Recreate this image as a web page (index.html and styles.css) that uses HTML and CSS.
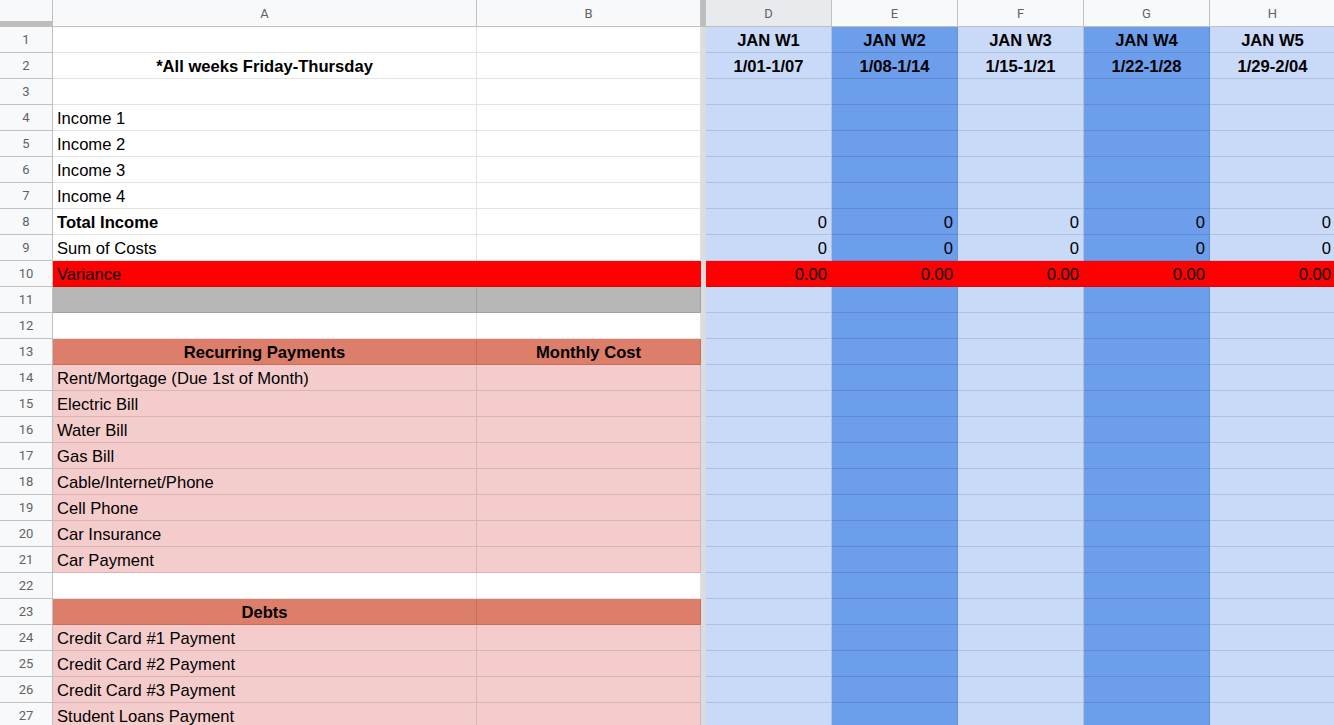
FILE: index.html
```html
<!DOCTYPE html>
<html>
<head>
<meta charset="utf-8">
<link rel="stylesheet" href="styles.css">
</head>
<body>
<div class="sheet">
  <div class="row head">
    <div class="corner"></div><div class="ch">A</div><div class="ch">B</div><div class="fz"></div><div class="ch sel">D</div><div class="ch">E</div><div class="ch">F</div><div class="ch">G</div><div class="ch">H</div>
  </div>
  <div class="row">
    <div class="rh">1</div><div class="c"></div><div class="c"></div><div class="fz"></div><div class="c b ctr">JAN W1</div><div class="c b ctr">JAN W2</div><div class="c b ctr">JAN W3</div><div class="c b ctr">JAN W4</div><div class="c b ctr">JAN W5</div>
  </div>
  <div class="row">
    <div class="rh">2</div><div class="c b ctr">*All weeks Friday-Thursday</div><div class="c"></div><div class="fz"></div><div class="c b ctr">1/01-1/07</div><div class="c b ctr">1/08-1/14</div><div class="c b ctr">1/15-1/21</div><div class="c b ctr">1/22-1/28</div><div class="c b ctr">1/29-2/04</div>
  </div>
  <div class="row">
    <div class="rh">3</div><div class="c"></div><div class="c"></div><div class="fz"></div><div class="c"></div><div class="c"></div><div class="c"></div><div class="c"></div><div class="c"></div>
  </div>
  <div class="row">
    <div class="rh">4</div><div class="c">Income 1</div><div class="c"></div><div class="fz"></div><div class="c"></div><div class="c"></div><div class="c"></div><div class="c"></div><div class="c"></div>
  </div>
  <div class="row">
    <div class="rh">5</div><div class="c">Income 2</div><div class="c"></div><div class="fz"></div><div class="c"></div><div class="c"></div><div class="c"></div><div class="c"></div><div class="c"></div>
  </div>
  <div class="row">
    <div class="rh">6</div><div class="c">Income 3</div><div class="c"></div><div class="fz"></div><div class="c"></div><div class="c"></div><div class="c"></div><div class="c"></div><div class="c"></div>
  </div>
  <div class="row">
    <div class="rh">7</div><div class="c">Income 4</div><div class="c"></div><div class="fz"></div><div class="c"></div><div class="c"></div><div class="c"></div><div class="c"></div><div class="c"></div>
  </div>
  <div class="row">
    <div class="rh">8</div><div class="c b">Total Income</div><div class="c"></div><div class="fz"></div><div class="c num">0</div><div class="c num">0</div><div class="c num">0</div><div class="c num">0</div><div class="c num">0</div>
  </div>
  <div class="row">
    <div class="rh">9</div><div class="c">Sum of Costs</div><div class="c"></div><div class="fz"></div><div class="c num">0</div><div class="c num">0</div><div class="c num">0</div><div class="c num">0</div><div class="c num">0</div>
  </div>
  <div class="row red">
    <div class="rh">10</div><div class="c">Variance</div><div class="c"></div><div class="fz"></div><div class="c num">0.00</div><div class="c num">0.00</div><div class="c num">0.00</div><div class="c num">0.00</div><div class="c num">0.00</div>
  </div>
  <div class="row gray">
    <div class="rh">11</div><div class="c"></div><div class="c"></div><div class="fz"></div><div class="c"></div><div class="c"></div><div class="c"></div><div class="c"></div><div class="c"></div>
  </div>
  <div class="row">
    <div class="rh">12</div><div class="c"></div><div class="c"></div><div class="fz"></div><div class="c"></div><div class="c"></div><div class="c"></div><div class="c"></div><div class="c"></div>
  </div>
  <div class="row sec">
    <div class="rh">13</div><div class="c b ctr">Recurring Payments</div><div class="c b ctr">Monthly Cost</div><div class="fz"></div><div class="c"></div><div class="c"></div><div class="c"></div><div class="c"></div><div class="c"></div>
  </div>
  <div class="row pink">
    <div class="rh">14</div><div class="c">Rent/Mortgage (Due 1st of Month)</div><div class="c"></div><div class="fz"></div><div class="c"></div><div class="c"></div><div class="c"></div><div class="c"></div><div class="c"></div>
  </div>
  <div class="row pink">
    <div class="rh">15</div><div class="c">Electric Bill</div><div class="c"></div><div class="fz"></div><div class="c"></div><div class="c"></div><div class="c"></div><div class="c"></div><div class="c"></div>
  </div>
  <div class="row pink">
    <div class="rh">16</div><div class="c">Water Bill</div><div class="c"></div><div class="fz"></div><div class="c"></div><div class="c"></div><div class="c"></div><div class="c"></div><div class="c"></div>
  </div>
  <div class="row pink">
    <div class="rh">17</div><div class="c">Gas Bill</div><div class="c"></div><div class="fz"></div><div class="c"></div><div class="c"></div><div class="c"></div><div class="c"></div><div class="c"></div>
  </div>
  <div class="row pink">
    <div class="rh">18</div><div class="c">Cable/Internet/Phone</div><div class="c"></div><div class="fz"></div><div class="c"></div><div class="c"></div><div class="c"></div><div class="c"></div><div class="c"></div>
  </div>
  <div class="row pink">
    <div class="rh">19</div><div class="c">Cell Phone</div><div class="c"></div><div class="fz"></div><div class="c"></div><div class="c"></div><div class="c"></div><div class="c"></div><div class="c"></div>
  </div>
  <div class="row pink">
    <div class="rh">20</div><div class="c">Car Insurance</div><div class="c"></div><div class="fz"></div><div class="c"></div><div class="c"></div><div class="c"></div><div class="c"></div><div class="c"></div>
  </div>
  <div class="row pink">
    <div class="rh">21</div><div class="c">Car Payment</div><div class="c"></div><div class="fz"></div><div class="c"></div><div class="c"></div><div class="c"></div><div class="c"></div><div class="c"></div>
  </div>
  <div class="row">
    <div class="rh">22</div><div class="c"></div><div class="c"></div><div class="fz"></div><div class="c"></div><div class="c"></div><div class="c"></div><div class="c"></div><div class="c"></div>
  </div>
  <div class="row sec">
    <div class="rh">23</div><div class="c b ctr">Debts</div><div class="c"></div><div class="fz"></div><div class="c"></div><div class="c"></div><div class="c"></div><div class="c"></div><div class="c"></div>
  </div>
  <div class="row pink">
    <div class="rh">24</div><div class="c">Credit Card #1 Payment</div><div class="c"></div><div class="fz"></div><div class="c"></div><div class="c"></div><div class="c"></div><div class="c"></div><div class="c"></div>
  </div>
  <div class="row pink">
    <div class="rh">25</div><div class="c">Credit Card #2 Payment</div><div class="c"></div><div class="fz"></div><div class="c"></div><div class="c"></div><div class="c"></div><div class="c"></div><div class="c"></div>
  </div>
  <div class="row pink">
    <div class="rh">26</div><div class="c">Credit Card #3 Payment</div><div class="c"></div><div class="fz"></div><div class="c"></div><div class="c"></div><div class="c"></div><div class="c"></div><div class="c"></div>
  </div>
  <div class="row pink">
    <div class="rh">27</div><div class="c">Student Loans Payment</div><div class="c"></div><div class="fz"></div><div class="c"></div><div class="c"></div><div class="c"></div><div class="c"></div><div class="c"></div>
  </div>
</div>
</body>
</html>
```

FILE: styles.css
```css
* { box-sizing: border-box; }
html, body { margin: 0; padding: 0; background: #fff; overflow: hidden; }
body { font-family: "Liberation Sans", Arial, sans-serif; color: #000; }

.sheet { width: 1334px; height: 725px; overflow: hidden; }

.row {
  display: grid;
  grid-template-columns: 53px 424px 224px 5px 126px 126px 126px 126px 126px;
  height: 26px;
}
.row.head { height: 27px; }

.corner {
  background: #f8f9fa;
  border-right: 1px solid #c0c0c0;
  border-bottom: 1px solid #c0c0c0;
  box-shadow: inset 0 -5px 0 #bdbdbd;
}
.ch {
  background: #f8f9fa;
  border-right: 1px solid #c0c0c0;
  border-bottom: 1px solid #c0c0c0;
  color: #5f6368;
  font-family: Roboto, "Liberation Sans", sans-serif;
  font-size: 13px;
  display: flex;
  align-items: center;
  justify-content: center;
}
.ch.sel { background: #e8eaed; }
.head .fz { background: #bdbdbd; }

.rh {
  background: #f8f9fa;
  border-right: 1px solid #c0c0c0;
  border-bottom: 1px solid #c0c0c0;
  color: #5f6368;
  font-family: Roboto, "Liberation Sans", sans-serif;
  font-size: 13px;
  display: flex;
  align-items: center;
  justify-content: center;
}

.fz { background: #dadce0; }

.c {
  border-right: 1px solid rgba(0, 0, 0, 0.115);
  border-bottom: 1px solid rgba(0, 0, 0, 0.115);
  font-size: 16.6px;
  line-height: 19px;
  padding: 0 4px 2px 4px;
  display: flex;
  align-items: flex-end;
  white-space: nowrap;
  overflow: hidden;
}
.c.b { font-weight: bold; }
.c.ctr { justify-content: center; }
.c.num { justify-content: flex-end; }

.row > .c:nth-child(5),
.row > .c:nth-child(7),
.row > .c:nth-child(9) { background: #c9daf8; }
.row > .c:nth-child(6),
.row > .c:nth-child(8) { background: #6d9eeb; }
.row > .c:nth-child(6) { border-right-color: rgba(0, 0, 0, 0.06); }

.row.red > .c { background: #ff0000; border-right-color: transparent; }
.row.red > .c:nth-child(3) { border-right: none; }
.row.gray > .c:nth-child(2),
.row.gray > .c:nth-child(3) { background: #b7b7b7; }
.row.sec > .c:nth-child(2),
.row.sec > .c:nth-child(3) { background: #dd7e6b; }
.row.pink > .c:nth-child(2),
.row.pink > .c:nth-child(3) { background: #f4cccc; }
```
